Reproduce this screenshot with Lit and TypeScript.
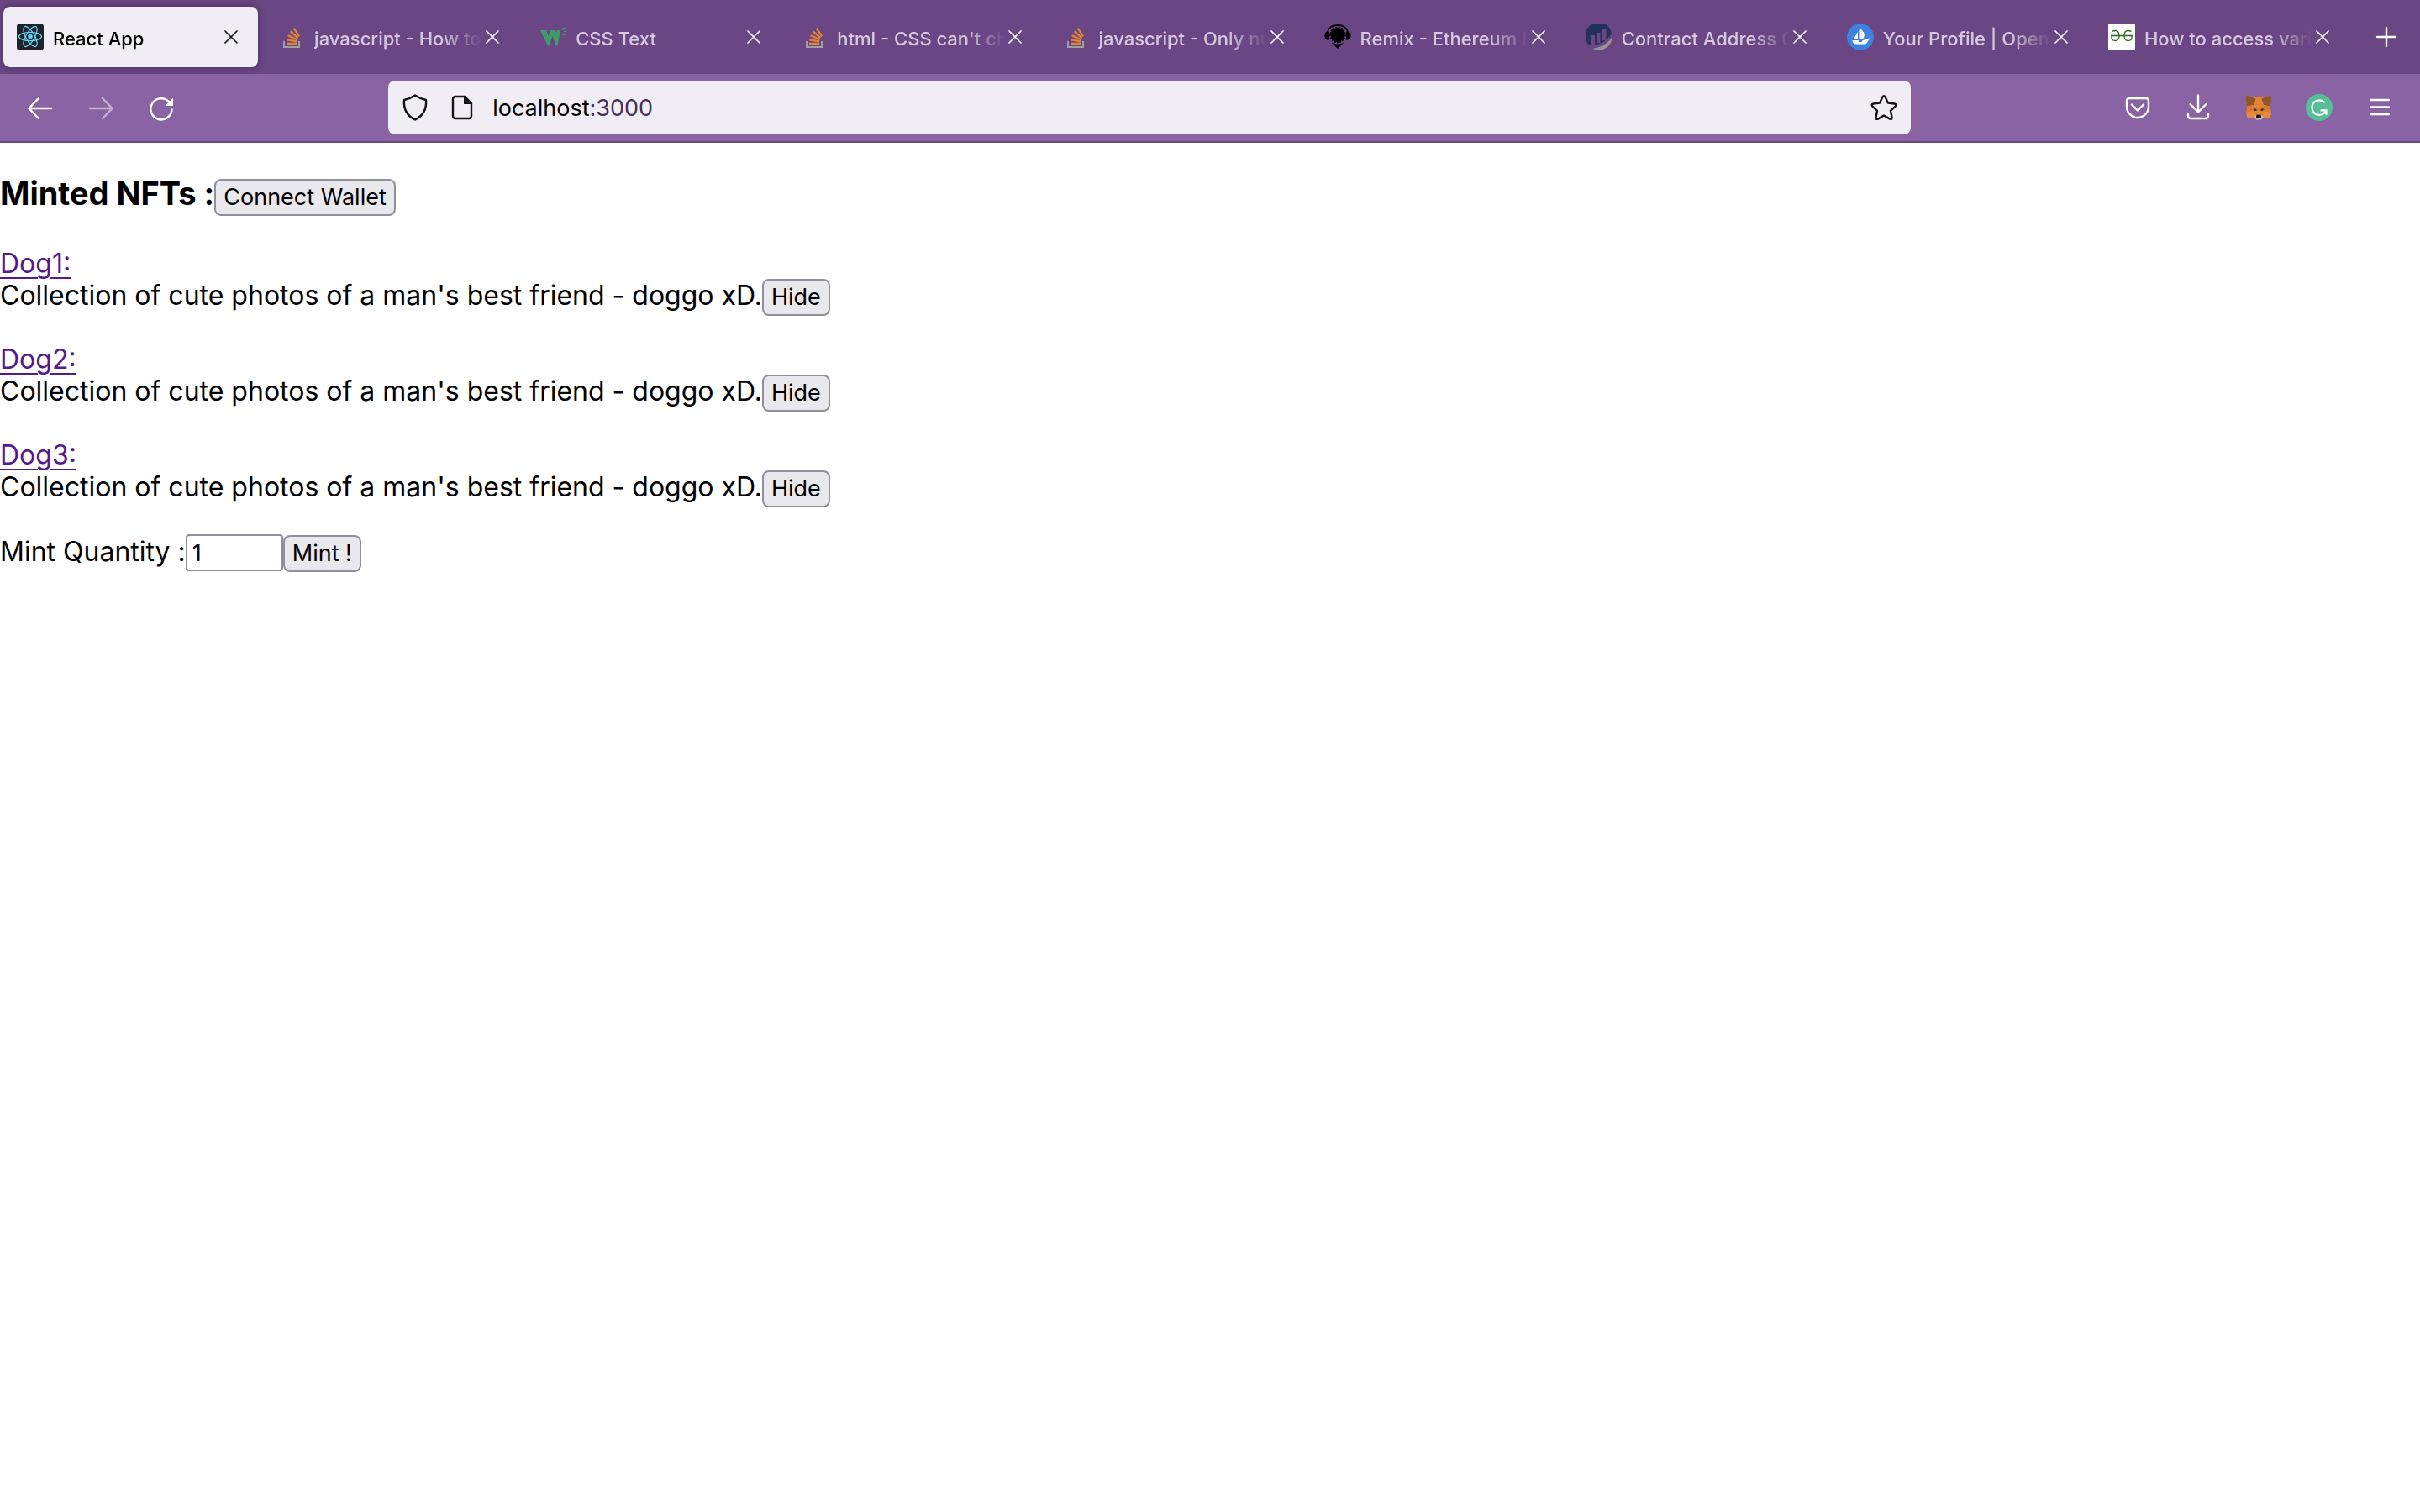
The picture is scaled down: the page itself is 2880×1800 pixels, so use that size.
import { LitElement, html, svg, css } from "lit";
import { customElement, property, state } from "lit/decorators.js";

const icons = {
  react: svg`<rect width="32" height="32" rx="4" fill="#20232a"/>
    <g fill="none" stroke="#61cdf0" stroke-width="1.3"><ellipse cx="16" cy="15.5" rx="13.5" ry="5.2"/><ellipse cx="16" cy="15.5" rx="13.5" ry="5.2" transform="rotate(60 16 15.5)"/><ellipse cx="16" cy="15.5" rx="13.5" ry="5.2" transform="rotate(120 16 15.5)"/></g><circle cx="16" cy="15.5" r="2.8" fill="#61cdf0"/>`,
  stack: svg`<path d="M7 21v7h18v-7" fill="none" stroke="#9da0a3" stroke-width="2"/>
    <g stroke="#e6832e" stroke-width="2.3"><path d="M10 24h12M10.3 19.4l11.8 1.9M11.6 14.2l10.9 4.9M14.6 9.4l9 7.8M18.6 5.6l6.6 9.8" fill="none"/></g>`,
  w3: svg`<path d="M1 8h7l2.500 7L13 8h6l1 2.500 1.500-2.500h3.500l-3.500 18.500h-1.500L15.500 15l-4 11.500H10z" fill="#3f9b68"/>
    <text x="26" y="14" font-family="Inter, sans-serif" font-size="12" font-weight="600" fill="#3f9b68">3</text>`,
  remix: svg`<path d="M3.500 11C5 5 10 2 16 2s11 3 12.500 9" fill="none" stroke="#000" stroke-width="1.800"/>
    <circle cx="16" cy="13.500" r="8.600"/><circle cx="16" cy="13.500" r="9" fill="none" stroke="#000" stroke-width="1.500" stroke-dasharray="1.800 1.500"/><path d="M4.500 9.500H6v10H4.500C1.500 19.500.5 17.500.5 14.500s1-5 4-5zM27.500 9.500H26v10h1.500c3 0 4-2 4-5s-1-5-4-5zM8.500 22.500q7.500 4 15 0L16 30z"/>`,
  etherscan: svg`<path d="M3 24.500A15.800 16 0 1 1 31 12c-4 7-11 12-22 13.500z" fill="#22325b"/><g fill="#6a4784"><rect x="7" y="14" width="4" height="12"/><rect x="13.500" y="11" width="4" height="12"/><rect x="20" y="7" width="4.500" height="13"/></g><path d="M31.600 15.500A16 16 0 0 1 8.500 30C20 28 28 23 31.600 15.500z" fill="#979695"/>`,
  opensea: svg`<circle cx="16" cy="16" r="16" fill="#3f82de"/><path d="M14.500 8l1.500-2 1.500 1.500C21 11 22 14 19 18.500h-4.500zM13 10v8.500H8zM6.500 20H14v2h3.500l1.500-2 8-2.500v1.500c-2 .5-2.500 5-5.500 5.500H11c-3 0-4.500-2-4.500-4.500z" fill="#fff"/>`,
  geeks: svg`<rect width="32" height="32" fill="#fff"/><g fill="none" stroke="#2c6a1c" stroke-width="1.300"><path d="M3 14.500h26" stroke-width="1.600"/><path d="M4.500 9.500Q6 8.500 8.500 8.500c3 0 4.500 2.500 4.500 6s-1.500 6-4.500 6q-4 0-4.500-3v-3M27.500 9.500Q26 8.500 23.500 8.500c-3 0-4.500 2.500-4.500 6s1.500 6 4.500 6q4 0 4.500-3v-3"/></g>`,
  close: svg`<path d="M1 1l14 14M15 1L1 15" fill="none" stroke="currentColor" stroke-width="1.700" stroke-linecap="round"/>`,
  plus: svg`<path d="M16 5v22M5 16h22" fill="none" stroke="currentColor" stroke-width="2.400" stroke-linecap="round"/>`,
  back: svg`<path d="M29 17H3M14 5L2.500 17 14 29" fill="none" stroke="currentColor" stroke-width="2.500" stroke-linecap="round" stroke-linejoin="round"/>`,
  forward: svg`<path d="M3 17h26M18 5l11.500 12L18 29" fill="none" stroke="currentColor" stroke-width="2.500" stroke-linecap="round" stroke-linejoin="round"/>`,
  reload: svg`<path d="M28.500 18.500A12.600 12.600 0 1 1 25 9" fill="none" stroke="currentColor" stroke-width="2.500" stroke-linecap="round"/><path d="M30 4.500V14h-9.500z" fill="currentColor"/>`,
  shield: svg`<path d="M16 1.500c4 2.800 8.500 4.500 13 5.500.8 10-2.500 18.500-13 23.500C5.500 25.500 2.200 17 3 7c4.500-1 9-2.700 13-5.500z" fill="none" stroke="currentColor" stroke-width="2.400" stroke-linejoin="round"/>`,
  page: svg`<path d="M8 3h11l8 8v15a3 3 0 0 1-3 3H8a3 3 0 0 1-3-3V6a3 3 0 0 1 3-3z" fill="none" stroke="currentColor" stroke-width="2.400"/><path d="M18 2.500v9.500h9.500z" fill="currentColor"/>`,
  star: svg`<path d="M14.300 3.600q1.700-3 3.400 0l3.100 7 7.700.9q3 .8 1.100 3.100l-5.700 5.200 1.700 8q0 2.900-2.500 1.800L16 25.500l-7.100 4.100q-2.500 1.100-2.500-1.800l1.700-8-5.700-5.200q-1.900-2.300 1.100-3.100l7.700-.9z" fill="none" stroke="currentColor" stroke-width="2.400" stroke-linejoin="round"/>`,
  pocket: svg`<path d="M6 5h20a3 3 0 0 1 3 3v7a13 13 0 0 1-26 0V8a3 3 0 0 1 3-3zM9 12.500l7 7 7-7" fill="none" stroke="currentColor" stroke-width="2.400" stroke-linecap="round" stroke-linejoin="round"/>`,
  download: svg`<path d="M16 1.500V21M6.500 12l9.500 9.500L25.500 12M4 24v2a3 3 0 0 0 3 3h18a3 3 0 0 0 3-3v-2" fill="none" stroke="currentColor" stroke-width="2.400" stroke-linecap="round" stroke-linejoin="round"/>`,
  fox: svg`<path d="M1.500 1l8 3h13l8-3 1 7-2 6 1.500 8-2 7-7-1.500L19.500 30h-7l-2.500-2.500L3 29l-2-7 1.500-8-2-6z" fill="#e38433"/>
    <path d="M1.500 1l11 4.500-.5 2-2 5.500-7.500 1.500-2-6.500zM30.500 1l-11 4.500.5 2 2 5.500 7.500 1.500 2-6.500z" fill="#8d562c"/>
    <path d="M2.500 14.500L10 13l2.500 6L1.500 22zM29.500 14.500L22 13l-2.500 6 11 3z" fill="#dd7a2d"/>
    <path d="M1 22l9-.5.5 5.500L3 29zM31 22l-9-.5-.5 5.500 7.500 2z" fill="#e98b3c"/>
    <path d="M9 19l1.500-2.500 4 2-.5 1.500zM23 19l-1.500-2.500-4 2 .5 1.500z" fill="#96521f"/><circle cx="12" cy="18.800" r="1.200" fill="#2f3542"/><circle cx="20" cy="18.800" r="1.200" fill="#2f3542"/>
    <path d="M10.500 27l3-2.500h5l3 2.500-2.500 3.500h-6z" fill="#cdc1b6"/><path d="M13.500 24.500h5l.700 3.500h-6.400z" fill="#16161a"/>`,
  grammarly: svg`<circle cx="16" cy="16" r="16" fill="#57bf98"/><path d="M22.500 10A8.800 8.800 0 1 0 22.500 22.200L24.200 19.500M17.500 19.300h7v5.500" fill="none" stroke="#fff" stroke-width="2.200"/>`,
  menu: svg`<path d="M5 7h22M5 15.500h22M5 24h22" fill="none" stroke="currentColor" stroke-width="2.300" stroke-linecap="round"/>`,
};
type IconName = keyof typeof icons;

@customElement("ui-icon")
class UiIcon extends LitElement {
  @property() name: IconName = "menu";
  @property() box = "0 0 32 32";
  static styles = css`
    :host { display: block; width: 32px; height: 32px; flex: none; }
    .icon { display: block; width: 100%; height: 100%; }
  `;
  render() {
    return html`<svg class="icon" viewBox=${this.box} aria-hidden="true">${icons[this.name]}</svg>`;
  }
}

@customElement("browser-tab")
class BrowserTab extends LitElement {
  @property() label = "";
  @property() icon: IconName = "react";
  @property({ type: Boolean, reflect: true }) active = false;
  static styles = css`
    :host { display: flex; flex: 1 1 0; min-width: 0; padding: 8px 4px; color: #fff; }
    .tab { display: flex; flex: 1; min-width: 0; align-items: center; padding: 0 20px 0 16px; border-radius: 8px; }
    :host([active]) .tab { color: #15141a; background: #f0edf4; box-shadow: 0 0 8px rgba(40, 15, 60, 0.5); }
    .title {
      flex: 1; min-width: 0; padding: 4px 0 0; margin-left: 11px; border: 0; background: none;
      font: 500 22px/32px Inter, sans-serif; color: #d6c9df; text-align: left; white-space: nowrap; overflow: hidden;
      -webkit-mask-image: linear-gradient(to right, #000 calc(100% - 48px), transparent);
      mask-image: linear-gradient(to right, #000 calc(100% - 48px), transparent);
    }
    :host([active]) .title { color: #000; }
    .close { display: grid; place-items: center; width: 24px; height: 24px; padding: 0; border: 0; background: none; color: inherit; }
    .cross { width: 16px; height: 16px; }
  `;
  render() {
    return html`<div class="tab">
      <ui-icon name=${this.icon}></ui-icon>
      <button class="title">${this.label}</button>
      <button class="close" aria-label="Close tab"><ui-icon class="cross" name="close" box="0 0 16 16"></ui-icon></button>
    </div>`;
  }
}

@customElement("app-root")
class AppRoot extends LitElement {
  @state() private quantity = 1;

  private tabs: { label: string; icon: IconName }[] = [
    { label: "React App", icon: "react" },
    { label: "javascript - How to", icon: "stack" },
    { label: "CSS Text", icon: "w3" },
    { label: "html - CSS can't ch", icon: "stack" },
    { label: "javascript - Only nu", icon: "stack" },
    { label: "Remix - Ethereum I", icon: "remix" },
    { label: "Contract Address 0", icon: "etherscan" },
    { label: "Your Profile | OpenS", icon: "opensea" },
    { label: "How to access varia", icon: "geeks" },
  ];
  private dogs = ["Dog1:", "Dog2:", "Dog3:"];

  static styles = css`
    :host { display: block; min-height: 100vh; background: #fff; color: #000; font-family: Inter, sans-serif; }
    .tabs { display: flex; height: 88px; background: #6a4784; color: #fff; }
    .tool { display: grid; place-items: center; flex: none; width: 72px; height: 64px; padding: 0; border: 0; background: none; color: #fff; }
    .new-tab { width: 80px; height: 88px; }
    .dim { opacity: 0.5; }
    .toolbar { display: flex; align-items: center; height: 80px; padding: 0 12px; background: #8963a3; border-bottom: 2px solid #6a4784; }
    .spring { flex: 5 1 0; }
    .address { display: flex; flex: 38 1 0; min-width: 0; height: 64px; align-items: center; box-sizing: border-box; padding: 0 16px; border-radius: 8px; background: #f0edf4; color: #15141a; }
    .field-icon { padding: 0; border: 0; background: none; color: inherit; }
    .page-icon { margin: 0 20px 0 24px; }
    .url { flex: 1; padding-top: 2px; font-size: 27px; line-height: 40px; color: #000; }
    .port { color: #46305a; }
    .page { padding-top: 42px; font-size: 32px; line-height: 36px; }
    .row { display: flex; align-items: baseline; height: 44px; line-height: 40px; white-space: pre; }
    .heading { margin: 0; font-size: 38px; font-weight: 700; line-height: 36px; }
    .dogs { display: flex; flex-direction: column; gap: 34px; margin: 40px 0 32px; padding: 0; list-style: none; }
    .link { display: block; width: fit-content; color: #551a8b; text-decoration: underline; text-decoration-thickness: 2px; text-underline-offset: 5px; }
    .button, .quantity { box-sizing: border-box; height: 44px; margin: 0; border: 2px solid #8f8f9d; font: 400 27px/40px Inter, sans-serif; color: #000; }
    .button { padding: 0 9px; border-radius: 8px; background: #e9e9ed; }
    .quantity { width: 116px; padding: 0 6px; border-radius: 4px; background: #fff; appearance: textfield; outline: 0; }
  `;

  private tool(name: IconName, label: string, extra = "") {
    return html`<button class="tool ${extra}" aria-label=${label}><ui-icon name=${name}></ui-icon></button>`;
  }

  render() {
    return html`
      <nav class="tabs">
        ${this.tabs.map((t, i) => html`<browser-tab .label=${t.label} .icon=${t.icon} ?active=${i === 0}></browser-tab>`)}
        ${this.tool("plus", "New tab", "new-tab")}
      </nav>
      <header class="toolbar">
        ${this.tool("back", "Back")}${this.tool("forward", "Forward", "dim")}${this.tool("reload", "Reload")}
        <div class="spring"></div>
        <div class="address">
          <button class="field-icon" aria-label="Tracking protection"><ui-icon name="shield"></ui-icon></button>
          <button class="field-icon page-icon" aria-label="Site information"><ui-icon name="page"></ui-icon></button>
          <span class="url">localhost<span class="port">:3000</span></span>
          <button class="field-icon" aria-label="Bookmark"><ui-icon name="star"></ui-icon></button>
        </div>
        <div class="spring"></div>
        ${this.tool("pocket", "Save")}${this.tool("download", "Downloads")}${this.tool("fox", "Wallet")}${this.tool("grammarly", "Writing assistant")}${this.tool("menu", "Menu")}
      </header>
      <main class="page">
        <div class="row"><h3 class="heading">Minted NFTs :</h3><button class="button">Connect Wallet</button></div>
        <ul class="dogs">
          ${this.dogs.map((d) => html`<li>
            <a class="link" href="#">${d}</a>
            <div class="row"><span>Collection of cute photos of a man's best friend - doggo xD.</span><button class="button">Hide</button></div>
          </li>`)}
        </ul>
        <div class="row"><label for="quantity">Mint Quantity :</label><input id="quantity" class="quantity" type="number" .value=${String(this.quantity)} @input=${(e: Event) => (this.quantity = Number((e.target as HTMLInputElement).value))}><button class="button">Mint !</button></div>
      </main>
    `;
  }
}
